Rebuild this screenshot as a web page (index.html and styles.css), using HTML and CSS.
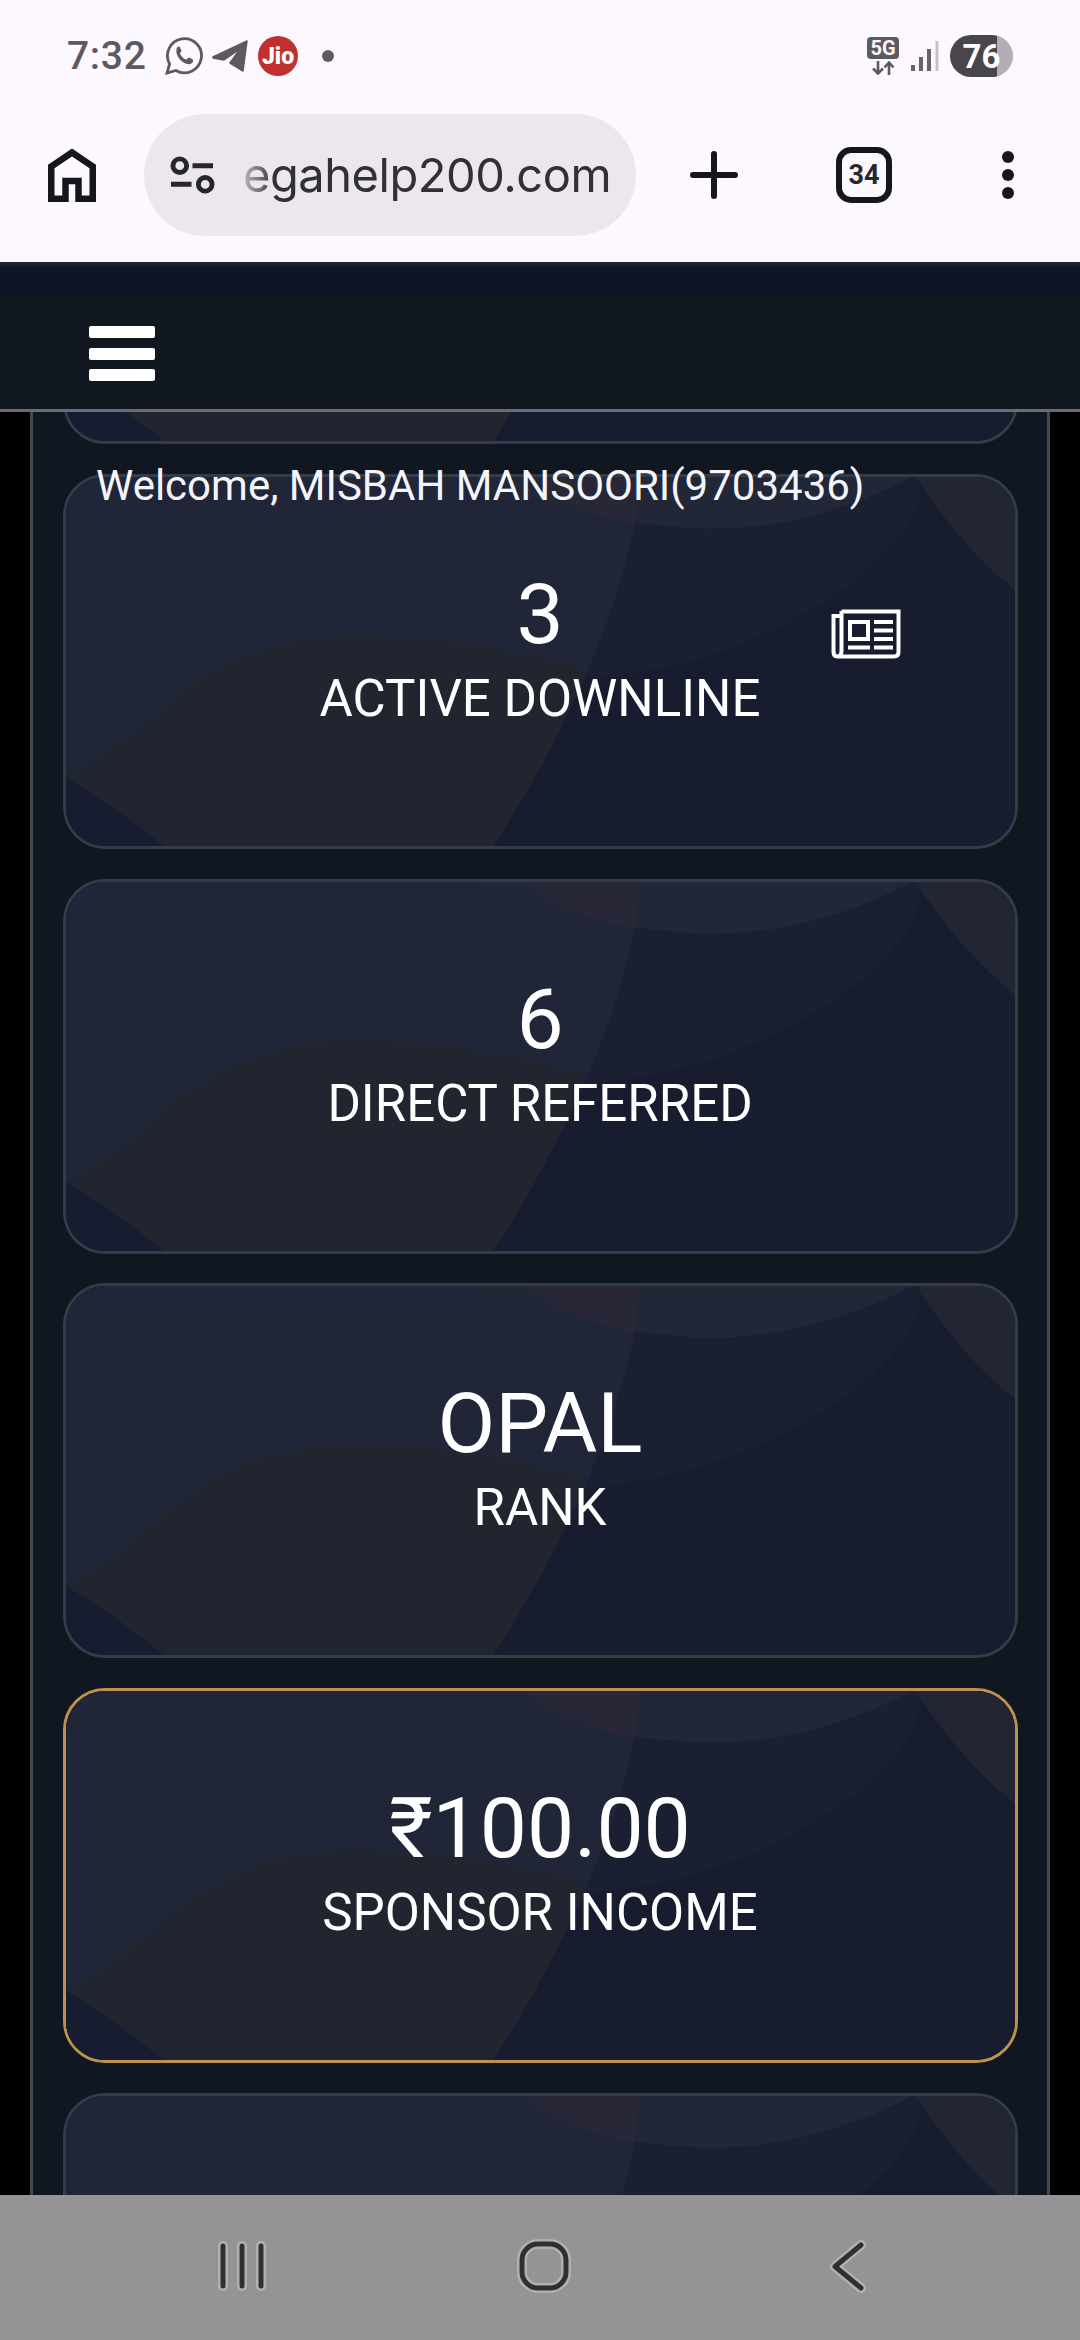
FILE: index.html
```html
<!DOCTYPE html>
<html lang="en">
<head>
<meta charset="utf-8">
<title>Dashboard</title>
<link rel="stylesheet" href="styles.css">
</head>
<body>
<svg class="defs" aria-hidden="true">
  <symbol id="art" viewBox="0 0 955 375" preserveAspectRatio="none">
    <rect width="955" height="375" fill="#181c2f"/>
    <path d="M500 0H858Q870 40 800 100Q680 195 515 206Z" fill="#1a2031"/>
    <path d="M0 0H580Q560 170 430 375H0Z" fill="#212538"/>
    <path d="M0 305Q60 270 110 222Q190 160 300 160Q420 165 523 195Q490 282 430 375H0Z" fill="#21252f"/>
    <path d="M0 305Q50 335 98 375H0Z" fill="#181c31"/>
    <path d="M400 0H852Q740 58 630 52Q510 45 400 0Z" fill="#222737"/>
    <path d="M460 0H578L572 48Q510 36 460 0Z" fill="#272738"/>
    <path d="M855 0H955V115Q900 70 855 0Z" fill="#212632"/>
  </symbol>
</svg>

<div class="status">
  <span class="clock">7:32</span>
  <svg class="wa" viewBox="0 0 38 38" fill="none" stroke="#5c5960" stroke-width="2.8"><path d="M2 36L4.600 27A17 17 0 1 1 11 33.500Z"/><path d="M12 10.500c1.500-1.500 2.600-1.200 3.300.4l1.200 2.600c.3.800-1.700 2.700-1.500 3.200 1.300 2.900 3.300 4.700 6.300 5.900.6.200 2-2.300 2.800-2l3.400 1.600c1.200.7.7 2.700-.7 4-5.500 4.200-18.500-6.500-14.800-15.700z" fill="#5c5960" stroke="none"/></svg>
  <svg class="tg" viewBox="0 0 36 32" fill="#5c5960"><path d="M1 17L35 1L31 31L18 23L28 9L12 20L1 18Z" stroke="#5c5960" stroke-width="1.500" stroke-linejoin="round"/></svg>
  <span class="jio">Jio</span>
  <span class="dot"></span>
  <div class="net"><span class="fiveg">5G</span>
    <svg class="arrows" viewBox="0 0 24 14" fill="none" stroke="#5c5960" stroke-width="2.600"><path d="M7 0V12M2 7.500L7 12.500L12 7.500M18 14V2M13.500 6.500L18 1.500L22.500 6.500"/></svg>
  </div>
  <svg class="signal" viewBox="0 0 28 30"><path d="M0 24h4v6H0zM8 16h4v14H8zM16 8h4v22h-4z" fill="#66636a"/><path d="M24.500 0h3v30h-3z" fill="#c6c1c8"/></svg>
  <span class="battery">76</span>
</div>

<div class="toolbar">
  <svg class="home" viewBox="0 0 48 54" fill="none" stroke="#16161e" stroke-width="6.500"><path d="M3.250 50.700V18.500L24 4.500L44.750 18.500V50.700H30.500V33H17.500V50.700Z"/></svg>
  <div class="omnibox">
    <svg class="tune" viewBox="0 0 46 38" fill="none" stroke="#27262d" stroke-width="5"><circle cx="10" cy="9.500" r="7"/><path d="M23 9.500H44M1 28.500H22"/><circle cx="36" cy="28.500" r="7"/></svg>
    <span class="url">egahelp200.com</span>
  </div>
  <svg class="plus" viewBox="0 0 48 48" stroke="#16161e" stroke-width="6" stroke-linecap="round"><path d="M24 3V45M3 24H45"/></svg>
  <span class="tabs">34</span>
  <svg class="more" viewBox="0 0 12 50" fill="#16161e"><circle cx="6" cy="7" r="6"/><circle cx="6" cy="25" r="6"/><circle cx="6" cy="43" r="6"/></svg>
</div>

<header class="site-header">
  <div class="burger"><i></i><i></i><i></i></div>
</header>

<main class="viewport">
  <p class="welcome">Welcome, MISBAH MANSOORI(9703436)</p>
  <div class="panel">
    <section class="card scrolled"><svg class="art"><use href="#art"/></svg></section>
    <section class="card"><svg class="art"><use href="#art"/></svg>
      <strong>3</strong><span>ACTIVE DOWNLINE</span>
      <svg class="news" viewBox="0 0 70 50" fill="none" stroke="#fff" stroke-width="4"><path d="M10.500 2.500H67.500V43Q67.500 47.500 63 47.500H6.500Q2.500 47.500 2.500 43V7H10.500M10.500 2V42Q10.500 47 6.500 47.500"/><rect x="19" y="13" width="18" height="17"/><path d="M43 13H62M43 21.500H62M43 30H62M17 38.500H39M43 38.500H62" stroke-width="3.800"/></svg>
    </section>
    <section class="card"><svg class="art"><use href="#art"/></svg><strong>6</strong><span>DIRECT REFERRED</span></section>
    <section class="card"><svg class="art"><use href="#art"/></svg><strong>OPAL</strong><span>RANK</span></section>
    <section class="card gold"><svg class="art"><use href="#art"/></svg><strong>₹100.00</strong><span>SPONSOR INCOME</span></section>
    <section class="card"><svg class="art"><use href="#art"/></svg></section>
  </div>
</main>

<nav class="sysnav">
  <svg viewBox="0 0 60 60"><path class="halo" d="M11 10V50M30 10V50M49 10V50"/><path d="M11 10V50M30 10V50M49 10V50"/></svg>
  <svg viewBox="0 0 60 60"><rect class="halo" x="8" y="8" width="44" height="44" rx="16"/><rect x="8" y="8" width="44" height="44" rx="16"/></svg>
  <svg viewBox="0 0 60 60"><path class="halo" d="M45 9L19 30.500L45 52"/><path d="M45 9L19 30.500L45 52"/></svg>
</nav>
</body>
</html>
```

FILE: styles.css
```css
* { box-sizing: border-box; }
body {
  margin: 0;
  width: 1080px;
  height: 2340px;
  overflow: hidden;
  display: flex;
  flex-direction: column;
  background: #000;
  font-family: Roboto, "Liberation Sans", sans-serif;
}
svg { display: block; flex: none; }
.defs { position: absolute; width: 0; height: 0; }

.status {
  height: 111px;
  flex: none;
  display: flex;
  align-items: center;
  padding: 0 67px 0 67px;
  background: #fdf7ff;
  color: #5c5960;
}
.clock { width: 98px; font-size: 39px; font-weight: 500; line-height: 1; letter-spacing: .7px; padding-top: 2px; }
.wa { width: 38px; height: 38px; }
.tg { width: 36px; height: 32px; margin-left: 9px; }
.jio {
  width: 40px; height: 40px; margin-left: 10px;
  border-radius: 50%;
  background: #c0302f; color: #fff;
  font-size: 23px; font-weight: 900; line-height: 42px; text-align: center;
}
.dot { width: 12px; height: 12px; margin-left: 24px; border-radius: 50%; background: #5c5960; }
.net { margin-left: auto; width: 32px; height: 38px; }
.fiveg {
  display: block; height: 22px; border-radius: 4px;
  background: #5c5960; color: #fdf7ff;
  font-size: 20px; font-weight: 700; line-height: 22px; text-align: center;
}
.arrows { width: 24px; height: 14px; margin: 2px 0 0 4px; }
.signal { width: 28px; height: 30px; margin: 0 11px 0 12px; }
.battery {
  width: 63px; height: 42px; border-radius: 21px;
  background: linear-gradient(90deg, #48464b 75%, #b3aeb5 75%);
  color: #fff; font-size: 33px; font-weight: 700; line-height: 43px; text-align: center;
}

.toolbar {
  height: 151px;
  flex: none;
  display: flex;
  align-items: center;
  padding: 0 66px 23px 48px;
  background: #fdf7ff;
}
.home { width: 48px; height: 54px; }
.omnibox {
  width: 492px; height: 122px; margin-left: 48px; padding-left: 26px;
  display: flex; align-items: center;
  border-radius: 61px;
  background: #ece6ed;
}
.tune { width: 45px; height: 38px; }
.url {
  margin-left: 28px;
  font-family: Inter, Roboto, sans-serif;
  font-size: 47px; line-height: 60px; letter-spacing: -.45px; color: #303036;
  white-space: nowrap;
  -webkit-mask-image: linear-gradient(90deg, rgba(0,0,0,.25), #000 32px);
  mask-image: linear-gradient(90deg, rgba(0,0,0,.25), #000 32px);
}
.plus { width: 48px; height: 48px; margin-left: 54px; }
.tabs {
  width: 56px; height: 56px; margin-left: 98px;
  border: 6.500px solid #16161e; border-radius: 15px;
  color: #27262d; font-size: 27px; font-weight: 700; line-height: 44px; text-align: center;
}
.more { width: 12px; height: 50px; margin-left: auto; }

.site-header {
  height: 150px;
  flex: none;
  padding: 64px 0 0 89px;
  border-bottom: 3px solid #696c76;
  background: linear-gradient(#232733 0, #0f1426 6px, #0e1425 28px, #111820 38px);
}
.burger { width: 66px; display: grid; gap: 9.500px; }
.burger i { height: 12px; border-radius: 2px; background: #fff; }

.viewport { position: relative; height: 1783px; flex: none; overflow: hidden; }
.panel {
  height: 100%;
  margin: 0 30px;
  padding: 0 29.500px;
  display: flex;
  flex-direction: column;
  gap: 29.700px;
  border: solid #43474f;
  border-width: 0 3px;
  background: #101720;
}
.welcome {
  position: absolute; z-index: 2; left: 96px; top: 49px;
  margin: 0;
  color: #f4f4fb; font-size: 42px; line-height: 49px; white-space: nowrap;
}
.card {
  position: relative;
  height: 375px;
  flex: none;
  display: flex;
  flex-direction: column;
  align-items: center;
  padding-top: 89px;
  border: 3px solid #343b49;
  border-radius: 42px;
  overflow: hidden;
  color: #fff;
}
.scrolled { margin-top: -342.700px; }
.gold { border-color: #bd914e; }
.art { position: absolute; inset: 0; width: 100%; height: 100%; }
.card strong, .card span { position: relative; white-space: nowrap; }
.card strong { font-size: 84px; font-weight: 400; line-height: 98px; }
.card span { margin-top: 4px; font-size: 51px; line-height: 62px; }
.news { position: absolute; left: 765px; top: 132px; width: 70px; height: 50px; }

.sysnav {
  height: 145px;
  flex: none;
  display: flex;
  gap: 242px;
  padding: 41px 0 0 212px;
  background: #959395;
}
.sysnav svg { width: 60px; height: 60px; fill: none; stroke: #303032; stroke-width: 5; stroke-linecap: round; stroke-linejoin: round; }
.sysnav .halo { stroke: #b2b0b2; stroke-width: 10; }
```
